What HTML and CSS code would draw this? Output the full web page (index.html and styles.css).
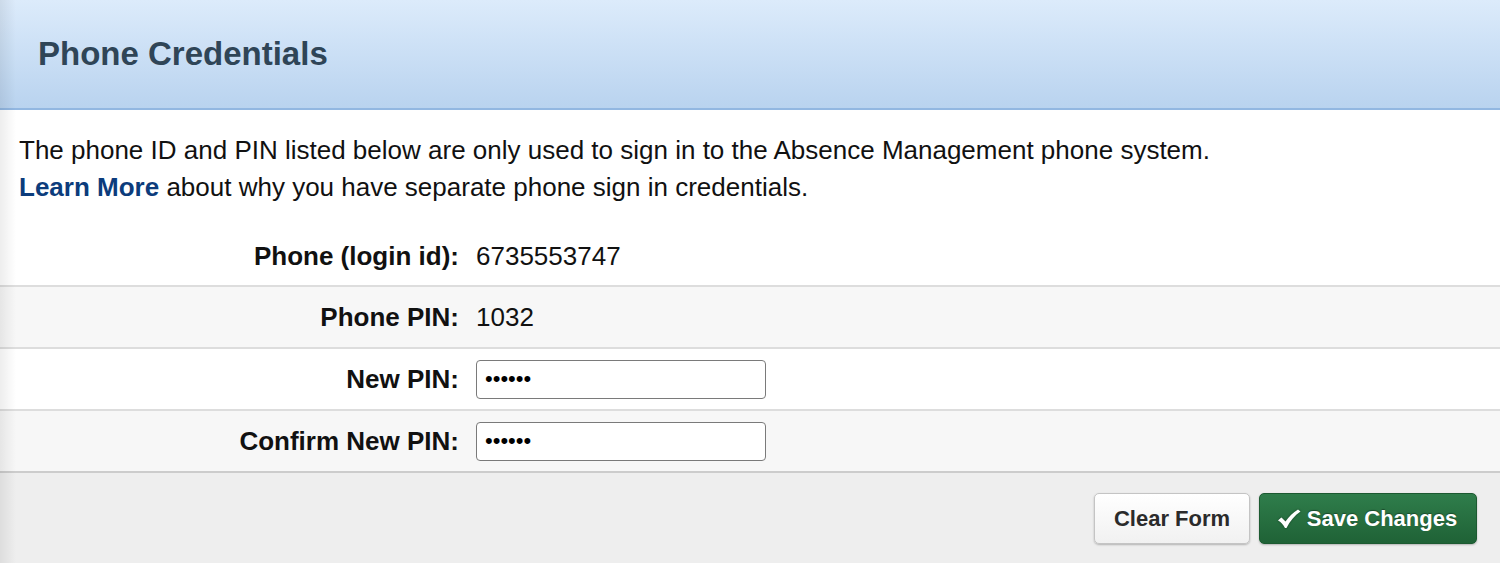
FILE: index.html
```html
<!DOCTYPE html>
<html lang="en">
<head>
<meta charset="utf-8">
<title>Phone Credentials</title>
<link rel="stylesheet" href="styles.css">
</head>
<body>
<div class="page">
  <div class="header">
    <h1 class="title">Phone Credentials</h1>
  </div>
  <div class="intro">
    <p class="line">The phone ID and PIN listed below are only used to sign in to the Absence Management phone system.</p>
    <p class="line"><a class="link" href="#">Learn More</a> about why you have separate phone sign in credentials.</p>
  </div>
  <div class="rows">
    <div class="row first">
      <div class="label">Phone (login id):</div>
      <div class="value">6735553747</div>
    </div>
    <div class="row alt">
      <div class="label">Phone PIN:</div>
      <div class="value">1032</div>
    </div>
    <div class="row">
      <div class="label">New PIN:</div>
      <div class="value"><input class="field" type="password" value="123456"></div>
    </div>
    <div class="row alt last">
      <div class="label">Confirm New PIN:</div>
      <div class="value"><input class="field" type="password" value="123456"></div>
    </div>
  </div>
  <div class="footer">
    <button class="btn btn-clear" type="button">Clear Form</button>
    <button class="btn btn-save" type="button"><svg class="check" viewBox="0 0 24 20" width="24" height="20"><path d="M1 11.5 C2.5 10 3.5 9 4.5 8.5 L8.5 12.5 C12 7.5 16 3.5 21 0.5 L23.5 2.5 C17.5 6.5 13 12 9.5 19 L8 19 C6 15.5 4 13 1 11.5 Z" fill="#ffffff"/></svg>Save Changes</button>
  </div>
</div>
</body>
</html>
```
FILE: styles.css
```css
* { box-sizing: border-box; }
html, body { margin: 0; padding: 0; }
body {
  font-family: "Liberation Sans", Arial, Helvetica, sans-serif;
  color: #111;
  background: #eeeeee;
}
.page {
  position: relative;
  width: 1500px;
  height: 563px;
  overflow: hidden;
  display: flex;
  flex-direction: column;
}
.page::after {
  content: "";
  position: absolute;
  left: 0; top: 0; bottom: 0;
  width: 16px;
  background: linear-gradient(to right, rgba(0,0,0,0.07), rgba(0,0,0,0));
  pointer-events: none;
}
.header {
  height: 110px;
  flex: none;
  background: linear-gradient(to bottom, #dcebfb 0%, #b9d3ef 100%);
  border-bottom: 2px solid #92b7e1;
  display: flex;
  align-items: center;
  padding-left: 38px;
  padding-bottom: 0;
}
.title {
  margin: 0;
  font-size: 33px;
  font-weight: bold;
  color: #2f4557;
}
.intro {
  background: #ffffff;
  padding: 22px 19px 19px;
}
.line {
  margin: 0;
  font-size: 26px;
  line-height: 37px;
  color: #111;
}
.link {
  color: #0c3c7c;
  font-weight: bold;
  text-decoration: none;
}
.rows { background: #ffffff; }
.row {
  display: grid;
  grid-template-columns: 459px 1fr;
  column-gap: 17px;
  align-items: center;
  height: 62px;
  border-bottom: 2px solid #dddddd;
  font-size: 26px;
}
.row.first { padding-top: 3px; }
.row.alt { background: #f7f7f7; }
.row.last { border-bottom-color: #cccccc; }
.label {
  text-align: right;
  font-weight: bold;
  color: #111;
}
.value { color: #111; }
.field {
  width: 290px;
  height: 39px;
  border: 1.5px solid #7a7a7a;
  border-radius: 4px;
  padding: 0 8px;
  font-size: 22px;
  font-family: "Liberation Sans", Arial, sans-serif;
  background: #fff;
  outline: none;
  display: block;
}
.footer {
  flex: 1;
  background: #eeeeee;
  display: flex;
  justify-content: flex-end;
  align-items: flex-start;
  gap: 9px;
  padding: 20px 23px 0 0;
}
.btn {
  height: 51px;
  font-family: "Liberation Sans", Arial, sans-serif;
  font-size: 22px;
  font-weight: bold;
  border-radius: 5px;
  cursor: pointer;
  display: flex;
  align-items: center;
  justify-content: center;
}
.btn-clear {
  width: 156px;
  color: #2b2b2b;
  background: linear-gradient(to bottom, #ffffff, #f1f1f1);
  border: 1px solid #c4c4c4;
  box-shadow: 0 1px 2px rgba(0,0,0,0.25);
}
.btn-save {
  width: 218px;
  color: #ffffff;
  background: linear-gradient(to bottom, #2f7d4b, #1f6236);
  border: 1px solid #1c5a31;
  box-shadow: 0 1px 2px rgba(0,0,0,0.25);
  text-shadow: 0 -1px 1px rgba(0,0,0,0.35);
  gap: 6px;
  padding-left: 4px;
}
.check { display: block; filter: drop-shadow(0 0 1px rgba(0,0,0,0.4)); }
```
